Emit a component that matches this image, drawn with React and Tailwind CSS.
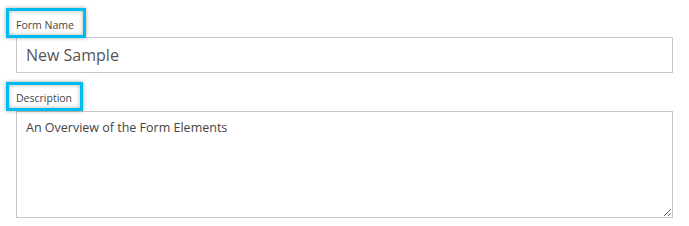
import React from "react";

function Highlight({ className }) {
  return (
    <span
      className={
        "pointer-events-none absolute border-[3px] border-[#00bcee] shadow-[0_0_4px_rgba(0,0,0,0.35),inset_0_0_4px_rgba(0,0,0,0.3)] " +
        className
      }
    />
  );
}

export default function App() {
  return (
    <div className="w-[689px] h-[226px] bg-white px-4 pt-[18px] font-['Open_Sans',sans-serif]">
      <label className="relative block w-max text-[10.5px] leading-[15px] text-[#444]">
        Form Name
        <Highlight className="left-[-10px] top-[-10px] w-[80px] h-[30px]" />
      </label>
      <input
        readOnly
        value="New Sample"
        className="mt-[4px] block w-[657px] h-[36px] border border-[#c8c8c8] px-[9px] text-[16px] text-[#555] outline-none font-['Open_Sans',sans-serif]"
      />
      <label className="relative mt-[18px] block w-max text-[10.5px] leading-[15px] text-[#444]">
        Description
        <Highlight className="left-[-10px] top-[-9px] w-[77px] h-[29px]" />
      </label>
      <textarea
        readOnly
        value="An Overview of the Form Elements"
        className="mt-[5px] block w-[657px] h-[107px] border border-[#c8c8c8] px-[9px] pt-[7px] text-[12.5px] leading-[18px] text-[#444] outline-none font-['Open_Sans',sans-serif]"
      />
    </div>
  );
}
